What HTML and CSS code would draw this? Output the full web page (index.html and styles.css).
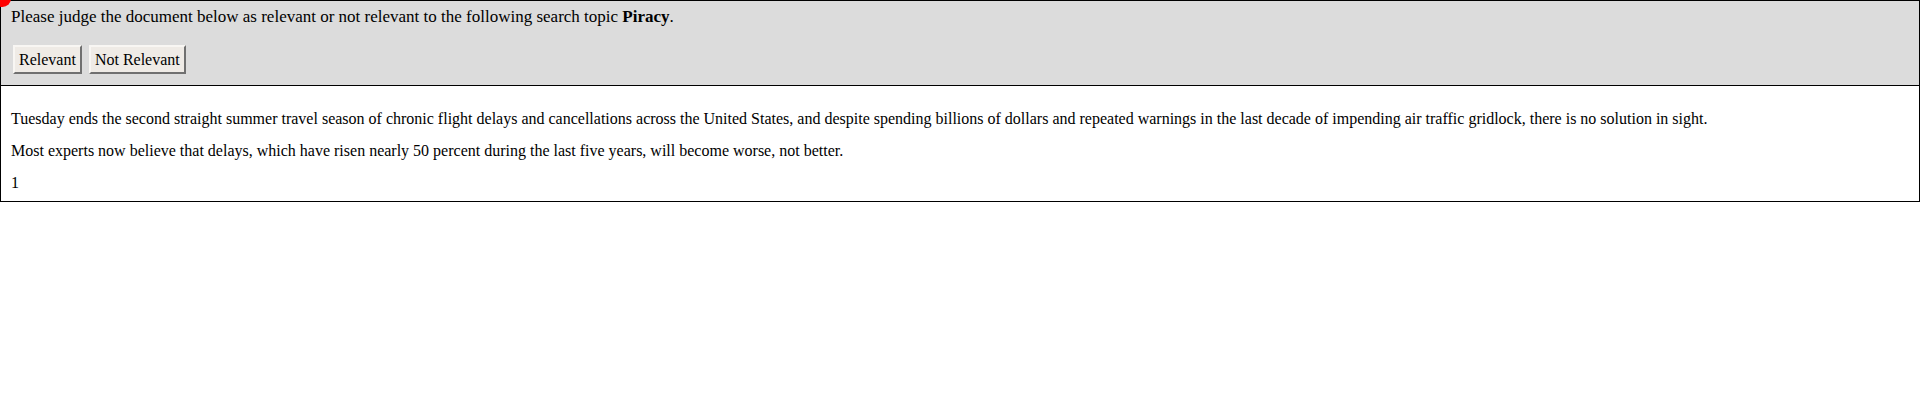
FILE: index.html
```html
<!DOCTYPE html>
<html>
<head>
<meta charset="utf-8">
<link rel="stylesheet" href="styles.css">
</head>
<body>
<div class="marker"></div>
<div class="judge">
  <p class="prompt">Please judge the document below as relevant or not relevant to the following search topic <b>Piracy</b>.</p>
  <div class="actions">
    <button class="btn">Relevant</button>
    <button class="btn">Not Relevant</button>
  </div>
</div>
<div class="doc">
  <p>Tuesday ends the second straight summer travel season of chronic flight delays and cancellations across the United States, and despite spending billions of dollars and repeated warnings in the last decade of impending air traffic gridlock, there is no solution in sight.</p>
  <p>Most experts now believe that delays, which have risen nearly 50 percent during the last five years, will become worse, not better.</p>
  <p>1</p>
</div>
</body>
</html>
```
FILE: styles.css
```css
html, body {
  margin: 0;
  padding: 0;
  background: #fff;
  font-family: "Liberation Serif", "Times New Roman", serif;
  font-size: 16px;
  color: #000;
}
.marker {
  position: absolute;
  left: -6px;
  top: -10px;
  width: 17px;
  height: 17px;
  border-radius: 50%;
  background: #ff0000;
}
.judge {
  background: #dcdcdc;
  border: 1px solid #000;
  padding: 6px 10px 11px;
}
.prompt {
  margin: 0;
  font-size: 17px;
  line-height: 20px;
}
.actions {
  margin-top: 18px;
  display: flex;
  gap: 7px;
  padding-left: 2px;
}
.btn {
  font-family: "Liberation Serif", "Times New Roman", serif;
  font-size: 16px;
  line-height: 18px;
  color: #000;
  background: #efebe6;
  border: 2px solid;
  border-color: #f8f6f3 #707070 #707070 #f8f6f3;
  padding: 4px 4px 3px;
  margin: 0;
}
.doc {
  border: 1px solid #000;
  border-top: none;
  padding: 25px 10px 10px;
}
.doc p {
  margin: 0 0 16px;
  line-height: 16px;
}
.doc p:last-child {
  margin-bottom: 0;
}
```
